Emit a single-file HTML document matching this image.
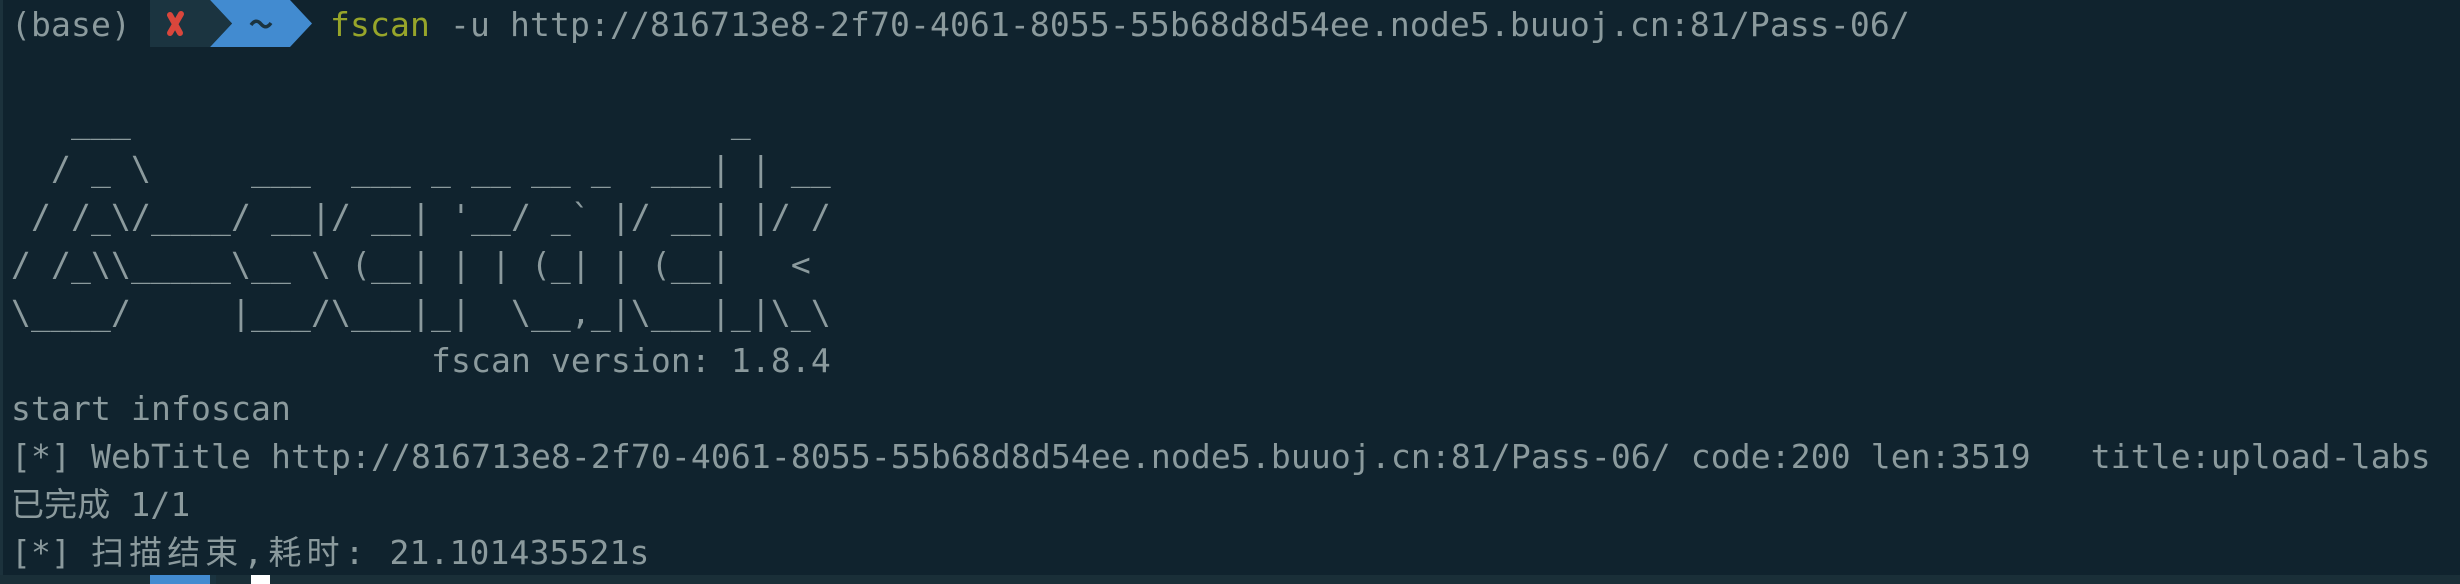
<!DOCTYPE html>
<html><head><meta charset="utf-8"><style>
html,body{margin:0;padding:0;}
body{width:2460px;height:584px;background:#10232e;overflow:hidden;position:relative;font-family:"DejaVu Sans Mono","Liberation Mono","Noto Sans CJK SC",monospace;font-size:33px;color:#8b9a9d;letter-spacing:0.13px;}
.l{position:absolute;left:11px;white-space:pre;line-height:48px;height:48px;}
.bl{position:absolute;left:0;top:0;width:3px;height:584px;background:#1c323c;}
.g{color:#97a52a;}
.bar{position:absolute;left:0;top:575px;width:2460px;height:9px;background:#1a2f38;}
</style></head><body>
<div class="bl"></div>
<svg style="position:absolute;left:150px;top:0" width="170" height="48">
<rect x="0" y="0" width="62" height="47" fill="#1b3440"/>
<polygon points="60,0 140,0 162,23.5 140,47 60,47 82,23.5" fill="#428bd0"/>
<polygon points="60,0 82,23.5 60,47" fill="#1b3440"/>
<path d="M20 15 L30 33 M31 14 L20 33" stroke="#d9463c" stroke-width="6" stroke-linecap="round"/>
<path d="M101 25 Q106 18 111 24 Q116 30 121 23" stroke="#1b3440" stroke-width="3.5" fill="none"/>
</svg>
<div class="l" style="top:1px">(base)</div>
<div class="l" style="top:1px;left:330px"><span class="g">fscan</span> -u http://816713e8-2f70-4061-8055-55b68d8d54ee.node5.buuoj.cn:81/Pass-06/</div>
<div class="l" style="top:97px">   ___                              _    </div>
<div class="l" style="top:145px">  / _ \     ___  ___ _ __ __ _  ___| | __ </div>
<div class="l" style="top:193px"> / /_\/____/ __|/ __| '__/ _` |/ __| |/ /</div>
<div class="l" style="top:241px">/ /_\\_____\__ \ (__| | | (_| | (__|   <    </div>
<div class="l" style="top:289px">\____/     |___/\___|_|  \__,_|\___|_|\_\   </div>
<div class="l" style="top:337px">                     fscan version: 1.8.4</div>
<div class="l" style="top:385px">start infoscan</div>
<div class="l" style="top:433px">[*] WebTitle http://816713e8-2f70-4061-8055-55b68d8d54ee.node5.buuoj.cn:81/Pass-06/ code:200 len:3519   title:upload-labs</div>
<div class="l" style="top:481px">已完成 1/1</div>
<div class="l" style="top:529px">[*] <span style="letter-spacing:5.1px">扫描结束,耗时:</span> 21.101435521s</div>
<div class="bar"></div>
<div style="position:absolute;left:150px;top:575px;width:60px;height:9px;background:#428bd0"></div>
<div style="position:absolute;left:210px;top:575px;width:6px;height:9px;background:#1b3440"></div>
<div style="position:absolute;left:251px;top:575px;width:19px;height:9px;background:#ffffff"></div>
</body></html>
